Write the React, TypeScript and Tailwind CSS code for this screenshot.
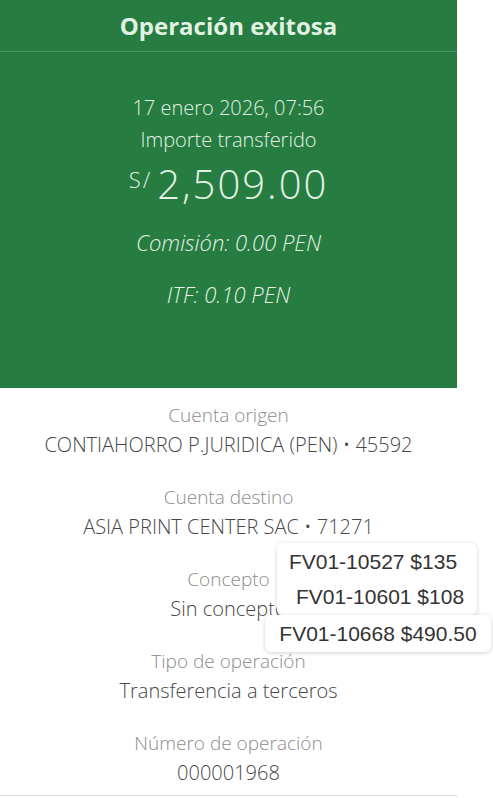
import React from 'react';

const details = [
  { label: 'Cuenta origen', value: 'CONTIAHORRO P.JURIDICA (PEN) • 45592' },
  { label: 'Cuenta destino', value: 'ASIA PRINT CENTER SAC • 71271' },
  { label: 'Concepto', value: 'Sin concepto' },
  { label: 'Tipo de operación', value: 'Transferencia a terceros' },
  { label: 'Número de operación', value: '000001968' },
];

export default function App() {
  return (
    <div className="relative w-[493px] h-[798px] bg-white overflow-hidden font-['Open_Sans',sans-serif]">
      <div className="w-[457px]">
        {/* Success header */}
        <div className="bg-[#277c41] text-[#e1f2e3]">
          <div className="h-[52px] flex items-center justify-center border-b border-[#4b9361] text-[24px] font-bold">
            Operación exitosa
          </div>
          <div className="flex flex-col items-center pt-[40px] pb-[82px]">
            <div className="text-[20px] leading-[32px] font-light">17 enero 2026, 07:56</div>
            <div className="text-[20px] leading-[32px] font-light">Importe transferido</div>
            <div className="mt-[6px] flex items-start leading-[44px] font-light">
              <span className="text-[22px] leading-[34px] tracking-[2px] mr-[5px]">S/</span>
              <span className="text-[40px] tracking-[2px]">2,509.00</span>
            </div>
            <div className="mt-[24px] text-[22px] leading-[24px] italic font-light">Comisión: 0.00 PEN</div>
            <div className="mt-[28px] text-[22px] leading-[24px] italic font-light">ITF: 0.10 PEN</div>
          </div>
        </div>

        {/* Detail rows */}
        <div className="flex flex-col items-center pt-[15px] pb-[10px] border-b border-[#d9d9d9]">
          {details.map((d, i) => (
            <div key={d.label} className={`flex flex-col items-center ${i > 0 ? 'mt-[28px]' : ''}`}>
              <div className="text-[19px] leading-[24px] text-[#8c8c8c] font-light">{d.label}</div>
              <div className="mt-[6px] text-[20px] leading-[24px] text-[#474747] font-light">{d.value}</div>
            </div>
          ))}
        </div>
      </div>

      {/* Invoice notes pasted on top */}
      <div className="absolute left-[277px] top-[543px] w-[200px] h-[72px] rounded-[6px] bg-white shadow-[0_1px_4px_rgba(0,0,0,0.18)] flex flex-col items-center font-['Liberation_Sans',Arial,sans-serif] text-[21px] text-[#333] leading-[35px] pt-[1px]">
        <div className="-ml-[8px]">FV01-10527 $135</div>
        <div className="ml-[6px]">FV01-10601 $108</div>
      </div>
      <div className="absolute left-[265px] top-[615px] w-[226px] h-[37px] rounded-[6px] bg-white shadow-[0_1px_4px_rgba(0,0,0,0.18)] flex items-center justify-center font-['Liberation_Sans',Arial,sans-serif] text-[21px] text-[#333]">
        FV01-10668 $490.50
      </div>
    </div>
  );
}
